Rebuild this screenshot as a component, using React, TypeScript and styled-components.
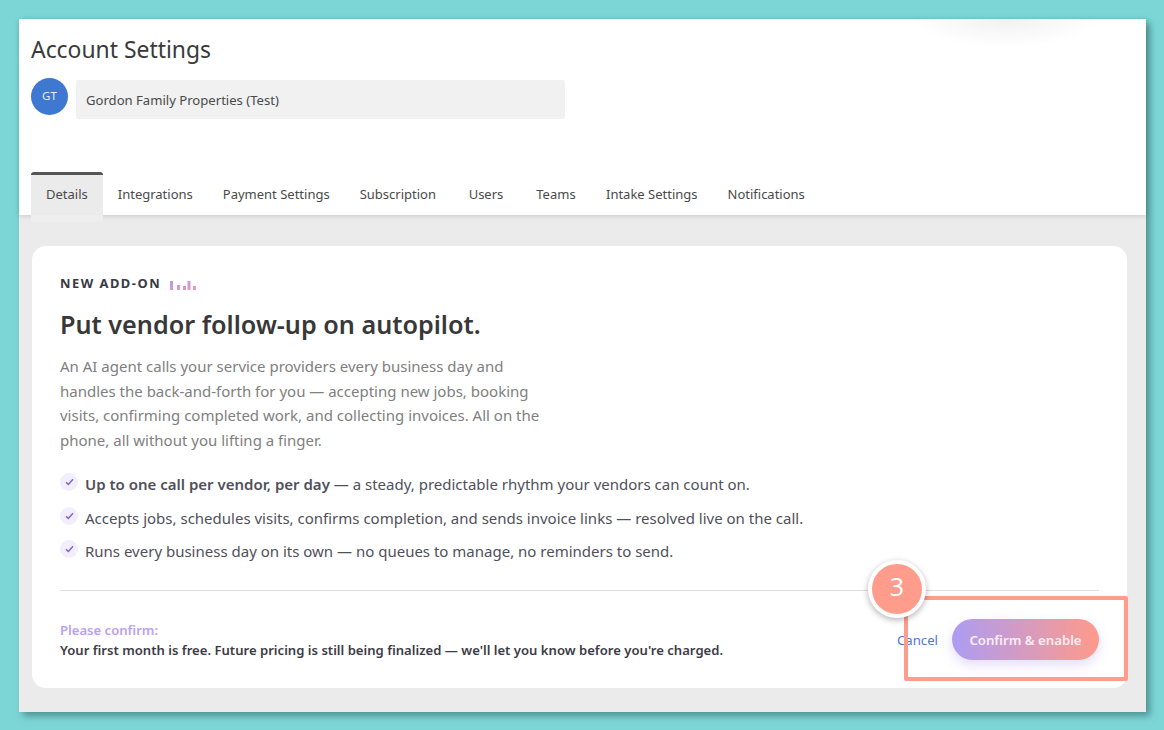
import * as React from "react"
import styled, { createGlobalStyle } from "styled-components"

const GlobalStyle = createGlobalStyle`
  html, body {
    margin: 0;
    padding: 0;
    height: 730px;
    overflow: hidden;
    background: #7dd6d6;
    font-family: "Noto Sans", "Open Sans", sans-serif;
  }
  * { box-sizing: border-box; }
`

const Page = styled.div`
  position: relative;
  width: 1164px;
  height: 730px;
  padding: 19px 18px 18px 19px;
`

const Window = styled.div`
  position: relative;
  height: 693px;
  display: flex;
  flex-direction: column;
  background: #ebebeb;
  box-shadow: 4px 4px 7px rgba(40, 90, 90, 0.55);
`

const Header = styled.header`
  position: relative;
  height: 196px;
  flex: none;
  padding: 14px 12px 0;
  background: #fff;
  box-shadow: 0 1px 5px rgba(0, 0, 0, 0.14);
  display: flex;
  flex-direction: column;
`

const TopGlow = styled.div`
  position: absolute;
  top: 0;
  right: 46px;
  width: 190px;
  height: 28px;
  background: radial-gradient(ellipse 50% 100% at 50% 0, rgba(0, 0, 0, 0.055), rgba(0, 0, 0, 0));
`

const Title = styled.h1`
  margin: 0;
  font-size: 22.9px;
  line-height: 33px;
  font-weight: 400;
  color: #3a3a3a;
`

const AccountRow = styled.div`
  display: flex;
  align-items: flex-start;
  gap: 8px;
  margin-top: 12px;
`

const Avatar = styled.div`
  width: 37px;
  height: 37px;
  padding-bottom: 2px;
  border-radius: 50%;
  background: #3f78d0;
  color: #e4edf9;
  font-size: 11.5px;
  display: flex;
  align-items: center;
  justify-content: center;
`

const NameField = styled.div`
  width: 489px;
  height: 39px;
  margin-top: 2px;
  padding-left: 10px;
  background: #f1f1f1;
  border-radius: 2px;
  color: #4a4a4a;
  font-size: 13.1px;
  display: flex;
  align-items: center;
`

const Tabs = styled.nav`
  display: flex;
  margin-top: auto;
  height: 43px;
`

const Tab = styled.div<{ $active?: boolean }>`
  position: relative;
  min-width: 70px;
  padding: 0 15px 2px;
  display: flex;
  align-items: center;
  justify-content: center;
  font-size: 13px;
  color: #4a4a4a;
  background: ${p => (p.$active ? "#ebebeb" : "transparent")};
  border-top: 3px solid ${p => (p.$active ? "#555" : "transparent")};
  border-radius: 3px 3px 0 0;
  z-index: 1;

  ${p =>
    p.$active &&
    `&::after {
      content: "";
      position: absolute;
      left: 0;
      right: 0;
      top: 100%;
      height: 7px;
      background: #eeeeee;
    }`}
`

const Content = styled.main`
  flex: 1;
  padding: 31px 19px 24px 13px;
`

const Card = styled.section`
  height: 442px;
  padding: 28px 28px 0;
  background: #fff;
  border-radius: 14px;
  display: flex;
  flex-direction: column;
`

const Eyebrow = styled.div`
  display: flex;
  align-items: center;
  gap: 9px;
  font-size: 12.9px;
  line-height: 18px;
  font-weight: 700;
  letter-spacing: 1.5px;
  color: #3a3a44;
`

const Headline = styled.h2`
  margin: 14px 0 0;
  font-size: 25.2px;
  line-height: 36px;
  font-weight: 600;
  color: #383838;
`

const Lead = styled.p`
  margin: 12px 0 0;
  width: 490px;
  font-size: 15px;
  line-height: 24.6px;
  color: #808080;
`

const Checks = styled.ul`
  list-style: none;
  margin: 20px 0 0;
  padding: 0;
  display: flex;
  flex-direction: column;
  gap: 9.3px;
`

const Check = styled.li`
  display: flex;
  align-items: center;
  gap: 7px;
  font-size: 15px;
  line-height: 24px;
  color: #50505a;

  strong {
    font-weight: 600;
  }
`

const Tick = styled.span`
  flex: none;
  width: 18px;
  height: 18px;
  margin-top: -4px;
  border-radius: 50%;
  background: #f2eefc;
  display: flex;
  align-items: center;
  justify-content: center;
`

const Footer = styled.footer`
  margin-top: 27.4px;
  padding-top: 31px;
  border-top: 1px solid #dedede;
  display: flex;
  align-items: flex-start;
  justify-content: space-between;
`

const Notice = styled.div`
  margin-top: -2px;
  font-size: 13.1px;
  line-height: 20px;
  font-weight: 600;
  color: #3c3c46;
`

const NoticeLabel = styled.div`
  color: #b9a0f7;
`

const Actions = styled.div`
  display: flex;
  align-items: center;
  gap: 14px;
  margin-top: -3px;
`

const CancelLink = styled.a`
  font-size: 13.2px;
  color: #4a7bd0;
`

const ConfirmButton = styled.button`
  width: 147px;
  height: 41px;
  border: 0;
  border-radius: 21px;
  background: linear-gradient(90deg, #ad9cf4, #ff9a8a);
  box-shadow: 0 5px 12px rgba(150, 120, 230, 0.25);
  color: #fbeef2;
  font-family: inherit;
  font-size: 13.2px;
  font-weight: 600;
`

const Highlight = styled.div`
  position: absolute;
  left: 904px;
  top: 596px;
  width: 224px;
  height: 85px;
  border: 4px solid #ff9c8c;
  border-radius: 2px;
`

const StepBadge = styled.div`
  position: absolute;
  left: 868px;
  top: 560px;
  width: 58px;
  height: 58px;
  padding-bottom: 6px;
  border: 4px solid #fff;
  border-radius: 50%;
  background: #ff9c8c;
  box-shadow: 0 2px 6px rgba(0, 0, 0, 0.3);
  color: #fff;
  font-family: "Open Sans", sans-serif;
  font-size: 25px;
  font-weight: 500;
  display: flex;
  align-items: center;
  justify-content: center;
`

const tabs = ["Details", "Integrations", "Payment Settings", "Subscription", "Users", "Teams", "Intake Settings", "Notifications"]

const Bars = () => (
  <svg width="27" height="14" viewBox="0 0 27 14">
    <defs>
      <linearGradient id="bars" x1="0" x2="1" y1="0" y2="1">
        <stop offset="0" stopColor="#b79af0" />
        <stop offset="1" stopColor="#f097b5" />
      </linearGradient>
    </defs>
    <path
      d="M0 5h3v9H0zM7 9h3v5H7zM13 10h3v4h-3zM17.5 5h3v9h-3zM23 10h3v4h-3z"
      fill="url(#bars)"
    />
  </svg>
)

const TickMark = () => (
  <svg width="9" height="8" viewBox="0 0 9 8" fill="none">
    <path d="M1 4.2l2.3 2.2L8 1.2" stroke="#7a5fd6" strokeWidth="1.4" />
  </svg>
)

export default function App() {
  return (
    <Page>
      <GlobalStyle />
      <Window>
        <Header>
          <TopGlow />
          <Title>Account Settings</Title>
          <AccountRow>
            <Avatar>GT</Avatar>
            <NameField>Gordon Family Properties (Test)</NameField>
          </AccountRow>
          <Tabs>
            {tabs.map((tab, i) => (
              <Tab key={tab} $active={i === 0}>{tab}</Tab>
            ))}
          </Tabs>
        </Header>
        <Content>
          <Card>
            <Eyebrow>NEW ADD-ON <Bars /></Eyebrow>
            <Headline>Put vendor follow-up on autopilot.</Headline>
            <Lead>
              An AI agent calls your service providers every business day and handles the back-and-forth for you — accepting new jobs, booking visits, confirming completed work, and collecting invoices. All on the phone, all without you lifting a finger.
            </Lead>
            <Checks>
              <Check><Tick><TickMark /></Tick><span><strong>Up to one call per vendor, per day</strong> — a steady, predictable rhythm your vendors can count on.</span></Check>
              <Check><Tick><TickMark /></Tick><span>Accepts jobs, schedules visits, confirms completion, and sends invoice links — resolved live on the call.</span></Check>
              <Check><Tick><TickMark /></Tick><span>Runs every business day on its own — no queues to manage, no reminders to send.</span></Check>
            </Checks>
            <Footer>
              <Notice>
                <NoticeLabel>Please confirm:</NoticeLabel>
                Your first month is free. Future pricing is still being finalized — we'll let you know before you're charged.
              </Notice>
              <Actions>
                <CancelLink>Cancel</CancelLink>
                <ConfirmButton>Confirm &amp; enable</ConfirmButton>
              </Actions>
            </Footer>
          </Card>
        </Content>
      </Window>
      <Highlight />
      <StepBadge>3</StepBadge>
    </Page>
  )
}
